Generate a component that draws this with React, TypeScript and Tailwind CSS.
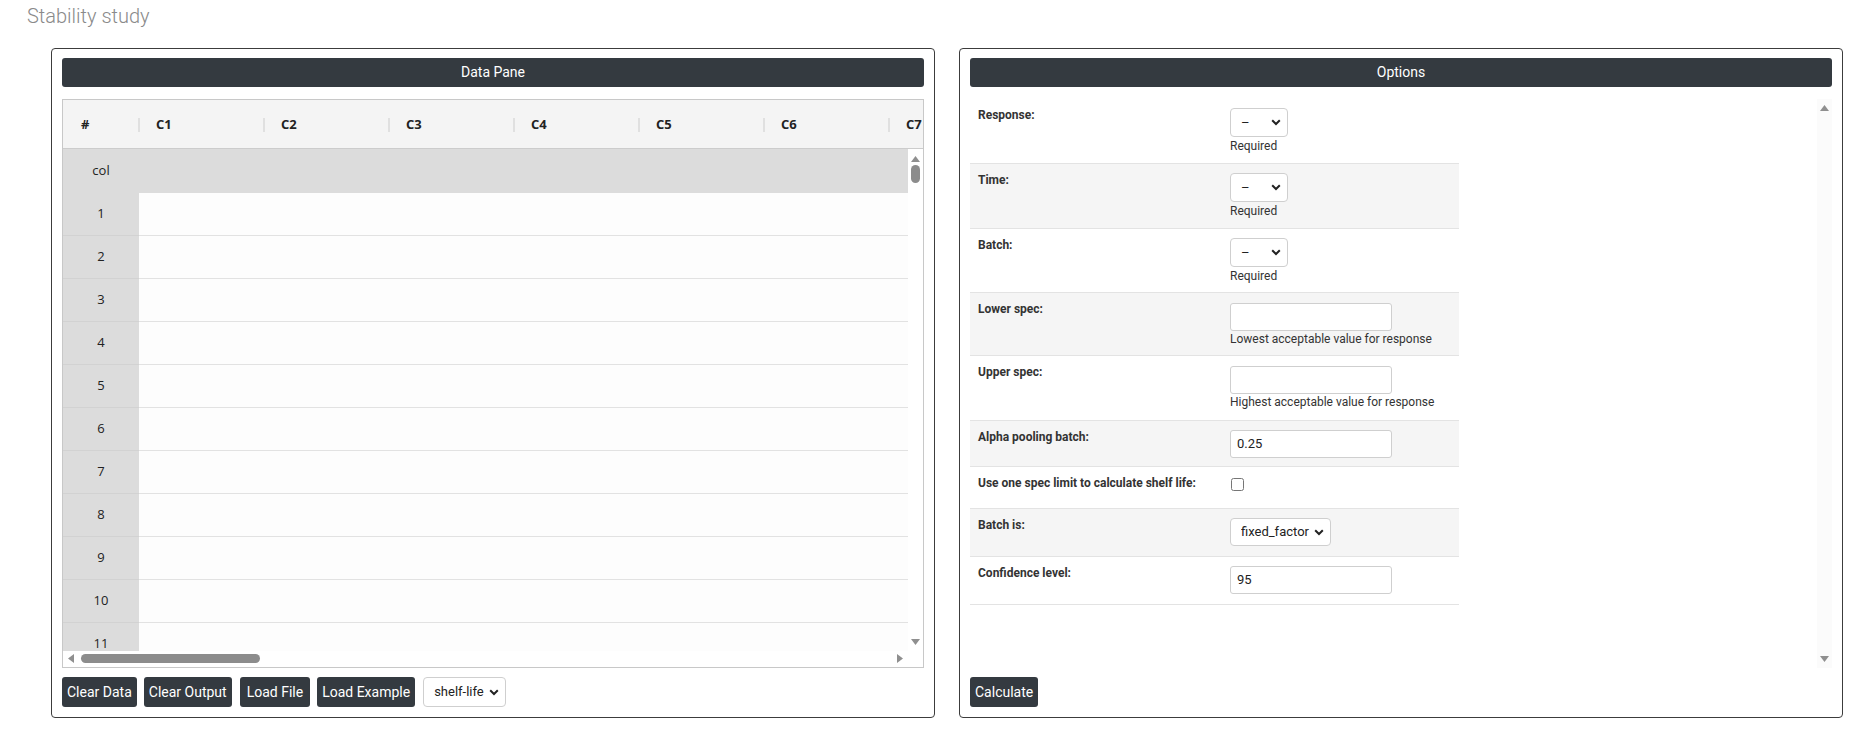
import React from "react";

const COLUMNS = ["C1", "C2", "C3", "C4", "C5", "C6", "C7"];
const ROWS = [1, 2, 3, 4, 5, 6, 7, 8, 9, 10, 11];

function Arrow({ dir }: { dir: "up" | "down" | "left" | "right" }) {
  const points = {
    up: "0,6 4.5,0 9,6",
    down: "0,0 9,0 4.5,6",
    left: "6,0 6,9 0,4.5",
    right: "0,0 0,9 6,4.5",
  }[dir];
  const vertical = dir === "up" || dir === "down";
  return (
    <svg
      width={vertical ? 9 : 6}
      height={vertical ? 6 : 9}
      viewBox={vertical ? "0 0 9 6" : "0 0 6 9"}
      className="block"
    >
      <polygon points={points} fill="#8f8f8f" />
    </svg>
  );
}

function Chevron() {
  return (
    <svg width="10" height="7" viewBox="0 0 10 7" className="block">
      <path d="M1.2 1.3 L5 5 L8.8 1.3" fill="none" stroke="#222" strokeWidth="2" />
    </svg>
  );
}

function Dropdown({ value, width, height }: { value: string; width: string; height: string }) {
  return (
    <div
      className={`relative flex items-center rounded-[4px] border border-[#cfcfcf] bg-white pl-[10px] pr-[6px] text-[13px] text-[#222] ${width} ${height}`}
    >
      <span className="flex-1 truncate">{value}</span>
      <Chevron />
    </div>
  );
}

function DarkButton({ children, wide }: { children: React.ReactNode; wide?: boolean }) {
  return (
    <button
      className={`h-[30px] rounded-[3px] bg-[#343a40] text-[14px] leading-none text-white ${wide ? "ml-[1px] px-[7px]" : "px-[5px]"}`}
    >
      {children}
    </button>
  );
}

function Panel({ title, children, footer }: { title: string; children: React.ReactNode; footer: React.ReactNode }) {
  return (
    <div className="rounded-[4px] border border-[#3c3c3c] px-[10px] pt-[9px] pb-[10px]">
      <div className="flex h-[29px] items-center justify-center rounded-[3px] bg-[#343a40] text-[14px] text-white">
        {title}
      </div>
      <div className="mt-[12px] h-[569px]">{children}</div>
      <div className="mt-[9px] flex h-[30px] items-center gap-[7px]">{footer}</div>
    </div>
  );
}

function DataGrid() {
  return (
    <div className="flex h-full flex-col overflow-hidden border border-[#c8c8c8] bg-white font-['Open_Sans',sans-serif] text-[13px] text-[#222]">
      {/* column headers */}
      <div className="flex h-[49px] shrink-0 items-center overflow-hidden border-b border-[#cccccc] bg-[#f4f4f4] pt-[2px] font-bold">
        <div className="w-[75px] shrink-0 pl-[18px]">#</div>
        {COLUMNS.map((c) => (
          <div key={c} className="flex w-[125px] shrink-0 items-center">
            <span className="h-[14px] w-[2px] bg-[#e0e0e0]" />
            <span className="pl-[16px]">{c}</span>
          </div>
        ))}
      </div>

      {/* body + vertical scrollbar */}
      <div className="flex h-[502px] shrink-0">
        <div className="flex-1 overflow-hidden">
          <div className="flex h-[44px] w-max items-center bg-[#dcdcdc]">
            <div className="w-[76px] text-center">col</div>
            <div className="w-[875px]" />
          </div>
          {ROWS.map((r) => (
            <div key={r} className="flex h-[43px] w-max">
              <div className="flex w-[76px] items-center justify-center border-b border-[#d2d2d2] bg-[#dcdcdc]">
                {r}
              </div>
              <div className="w-[875px] border-b border-[#e2e2e2] bg-[#fdfdfd]" />
            </div>
          ))}
        </div>
        <div className="flex w-[15px] shrink-0 flex-col items-center bg-white">
          <div className="mt-[7px]">
            <Arrow dir="up" />
          </div>
          <div className="mt-[3px] h-[18px] w-[9px] rounded-full bg-[#8c8c8c]" />
          <div className="flex-1" />
          <div className="mb-[6px]">
            <Arrow dir="down" />
          </div>
        </div>
      </div>

      {/* horizontal scrollbar */}
      <div className="flex h-[15px] shrink-0 items-center bg-white">
        <div className="ml-[5px]">
          <Arrow dir="left" />
        </div>
        <div className="ml-[7px] h-[9px] w-[179px] rounded-full bg-[#8c8c8c]" />
        <div className="flex-1" />
        <div className="mr-[20px]">
          <Arrow dir="right" />
        </div>
      </div>
    </div>
  );
}

function FormRow({ label, striped, children }: { label: string; striped?: boolean; children: React.ReactNode }) {
  return (
    <div className={`flex border-b border-[#e3e3e3] ${striped ? "bg-[#f5f5f5]" : "bg-white"}`}>
      <div className="w-[260px] shrink-0 px-[8px] pt-[9px] text-[12px] font-bold leading-[14px] text-[#333]">{label}</div>
      <div className="flex-1">{children}</div>
    </div>
  );
}

function TextField({ value }: { value?: string }) {
  return (
    <div className="flex h-[28px] w-[162px] items-center rounded-[3px] border border-[#cfcfcf] bg-white px-[6px] text-[13px] text-[#222]">
      {value}
    </div>
  );
}

function Hint({ children }: { children: React.ReactNode }) {
  return <div className="text-[12px] leading-[17px] text-[#333]">{children}</div>;
}

function OptionsForm() {
  return (
    <div className="flex h-full">
      <div className="flex-1 overflow-hidden">
        <div className="w-[489px]">
          <FormRow label="Response:">
            <div className="pt-[9px] pb-[8px]">
              <Dropdown value="–" width="w-[58px]" height="h-[29px]" />
              <div className="mt-[1px]">
                <Hint>Required</Hint>
              </div>
            </div>
          </FormRow>
          <FormRow label="Time:" striped>
            <div className="pt-[9px] pb-[8px]">
              <Dropdown value="–" width="w-[58px]" height="h-[29px]" />
              <div className="mt-[1px]">
                <Hint>Required</Hint>
              </div>
            </div>
          </FormRow>
          <FormRow label="Batch:">
            <div className="pt-[9px] pb-[7px]">
              <Dropdown value="–" width="w-[58px]" height="h-[29px]" />
              <div className="mt-[1px]">
                <Hint>Required</Hint>
              </div>
            </div>
          </FormRow>
          <FormRow label="Lower spec:" striped>
            <div className="pt-[10px] pb-[7px]">
              <TextField />
              <Hint>Lowest acceptable value for response</Hint>
            </div>
          </FormRow>
          <FormRow label="Upper spec:">
            <div className="pt-[10px] pb-[9px]">
              <TextField />
              <Hint>Highest acceptable value for response</Hint>
            </div>
          </FormRow>
          <FormRow label="Alpha pooling batch:" striped>
            <div className="pt-[9px] pb-[8px]">
              <TextField value="0.25" />
            </div>
          </FormRow>
          <FormRow label="Use one spec limit to calculate shelf life:">
            <div className="pt-[11px] pb-[17px] pl-[1px]">
              <input type="checkbox" className="m-0 block h-[13px] w-[13px]" readOnly />
            </div>
          </FormRow>
          <FormRow label="Batch is:" striped>
            <div className="pt-[9px] pb-[10px]">
              <Dropdown value="fixed_factor" width="w-[101px]" height="h-[28px]" />
            </div>
          </FormRow>
          <FormRow label="Confidence level:">
            <div className="pt-[9px] pb-[10px]">
              <TextField value="95" />
            </div>
          </FormRow>
        </div>
      </div>
      <div className="flex w-[15px] shrink-0 flex-col items-center bg-[#fbfbfb]">
        <div className="mt-[6px]">
          <Arrow dir="up" />
        </div>
        <div className="flex-1" />
        <div className="mb-[6px]">
          <Arrow dir="down" />
        </div>
      </div>
    </div>
  );
}

export default function App() {
  return (
    <div className="min-h-screen bg-white font-['Roboto',sans-serif]">
      <h1 className="pl-[27px] pt-[2px] text-[20px] font-light leading-[28px] text-[#8a8a8a]">Stability study</h1>
      <div className="mt-[18px] ml-[51px] mr-[27px] grid grid-cols-2 gap-[24px]">
        <Panel
          title="Data Pane"
          footer={
            <>
              <DarkButton>Clear Data</DarkButton>
              <DarkButton>Clear Output</DarkButton>
              <DarkButton wide>Load File</DarkButton>
              <DarkButton>Load Example</DarkButton>
              <div className="ml-[1px]">
                <Dropdown value="shelf-life" width="w-[83px]" height="h-[30px]" />
              </div>
            </>
          }
        >
          <DataGrid />
        </Panel>
        <Panel title="Options" footer={<DarkButton>Calculate</DarkButton>}>
          <OptionsForm />
        </Panel>
      </div>
    </div>
  );
}
